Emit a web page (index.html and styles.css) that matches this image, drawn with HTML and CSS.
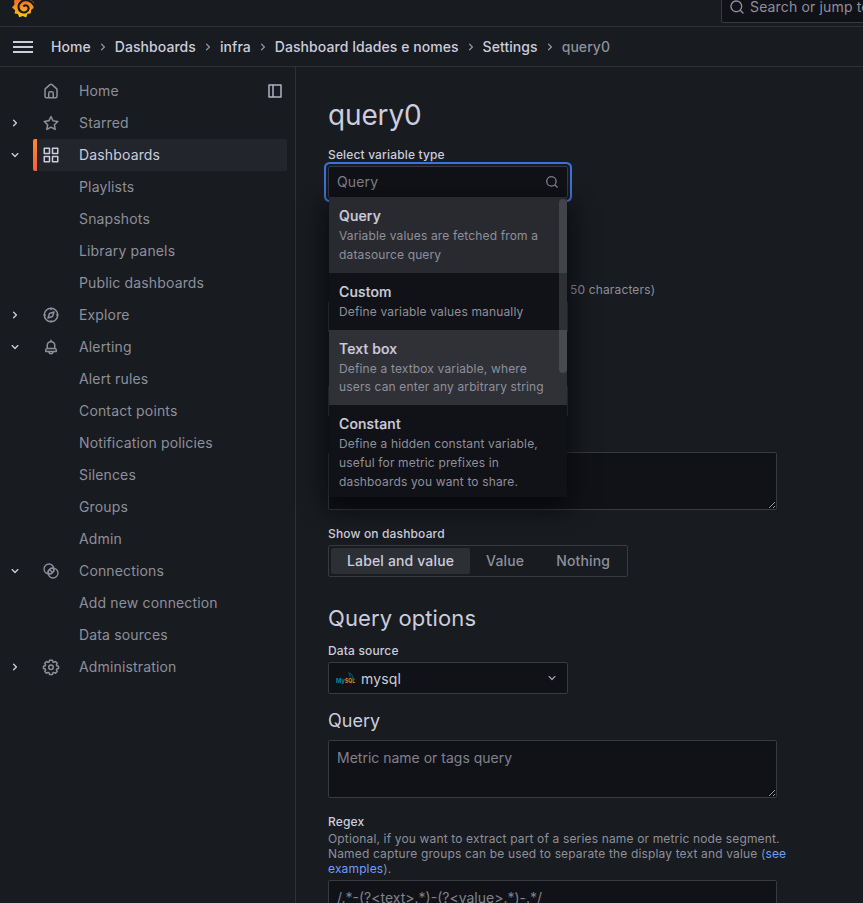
FILE: index.html
```html
<!DOCTYPE html>
<html lang="en">
<head>
<meta charset="utf-8">
<title>query0 - Settings - Grafana</title>
<link rel="stylesheet" href="styles.css">
</head>
<body>
<svg class="defs" width="0" height="0" aria-hidden="true">
  <symbol id="down" viewBox="0 0 24 24"><path d="M17,9.17a1,1,0,0,0-1.41,0L12,12.71,8.46,9.17a1,1,0,0,0-1.41,0,1,1,0,0,0,0,1.42l4.24,4.24a1,1,0,0,0,1.42,0L17,10.59A1,1,0,0,0,17,9.17Z"/></symbol>
  <symbol id="right" viewBox="0 0 24 24"><path d="M14.83,11.29,10.59,7.05a1,1,0,0,0-1.42,0,1,1,0,0,0,0,1.41L12.71,12,9.17,15.54a1,1,0,0,0,0,1.41,1,1,0,0,0,.71.29,1,1,0,0,0,.71-.29l4.24-4.24A1,1,0,0,0,14.83,11.29Z"/></symbol>
  <symbol id="search" viewBox="0 0 24 24"><path d="M21.71,20.29,18,16.61A9,9,0,1,0,16.61,18l3.68,3.68a1,1,0,0,0,1.42,0A1,1,0,0,0,21.71,20.29ZM11,18a7,7,0,1,1,7-7A7,7,0,0,1,11,18Z"/></symbol>
  <symbol id="home" viewBox="0 0 24 24"><path d="M20,8h0L14,2.74a3,3,0,0,0-4,0L4,8a3,3,0,0,0-1,2.26V19a3,3,0,0,0,3,3H18a3,3,0,0,0,3-3V10.25A3,3,0,0,0,20,8ZM14,20H10V15a1,1,0,0,1,1-1h2a1,1,0,0,1,1,1Zm5-1a1,1,0,0,1-1,1H16V15a3,3,0,0,0-3-3H11a3,3,0,0,0-3,3v5H6a1,1,0,0,1-1-1V10.25a1,1,0,0,1,.34-.75l6-5.25a1,1,0,0,1,1.32,0l6,5.25a1,1,0,0,1,.34.75Z"/></symbol>
  <symbol id="star" viewBox="0 0 24 24"><path d="M22,9.67A1,1,0,0,0,21.14,9l-5.69-.83L12.9,3a1,1,0,0,0-1.8,0L8.55,8.16,2.86,9a1,1,0,0,0-.81.68,1,1,0,0,0,.25,1l4.13,4-1,5.68A1,1,0,0,0,6.9,21.44L12,18.77l5.1,2.67a.93.93,0,0,0,.46.12,1,1,0,0,0,.59-.19,1,1,0,0,0,.4-1l-1-5.68,4.13-4A1,1,0,0,0,22,9.67Zm-6.15,4a1,1,0,0,0-.29.88l.72,4.2-3.76-2a1.06,1.06,0,0,0-.94,0l-3.76,2,.72-4.2a1,1,0,0,0-.29-.88l-3-3,4.21-.61a1,1,0,0,0,.76-.55L12,5.7l1.88,3.82a1,1,0,0,0,.76.55l4.21.61Z"/></symbol>
  <symbol id="apps" viewBox="0 0 24 24"><path d="M10,13H3a1,1,0,0,0-1,1v7a1,1,0,0,0,1,1h7a1,1,0,0,0,1-1V14A1,1,0,0,0,10,13ZM9,20H4V15H9ZM21,2H14a1,1,0,0,0-1,1v7a1,1,0,0,0,1,1h7a1,1,0,0,0,1-1V3A1,1,0,0,0,21,2ZM20,9H15V4h5Zm1,4H14a1,1,0,0,0-1,1v7a1,1,0,0,0,1,1h7a1,1,0,0,0,1-1V14A1,1,0,0,0,21,13Zm-1,7H15V15h5ZM10,2H3A1,1,0,0,0,2,3v7a1,1,0,0,0,1,1h7a1,1,0,0,0,1-1V3A1,1,0,0,0,10,2ZM9,9H4V4H9Z"/></symbol>
  <symbol id="bell" viewBox="0 0 24 24"><path d="M18,13.18V10a6,6,0,0,0-5-5.91V3a1,1,0,0,0-2,0V4.09A6,6,0,0,0,6,10v3.18A3,3,0,0,0,4,16v2a1,1,0,0,0,1,1H8.14a4,4,0,0,0,7.72,0H19a1,1,0,0,0,1-1V16A3,3,0,0,0,18,13.18ZM8,10a4,4,0,0,1,8,0v3H8Zm4,10a2,2,0,0,1-1.72-1h3.44A2,2,0,0,1,12,20Zm6-3H6V16a1,1,0,0,1,1-1H17a1,1,0,0,1,1,1Z"/></symbol>
  <symbol id="compass" viewBox="0 0 24 24"><g fill="none" stroke="currentColor" stroke-width="2" stroke-linejoin="round" stroke-linecap="round"><circle cx="12" cy="12" r="9"/><path d="M16 8l-2 6-6 2 2-6zM12 3v1.500M12 19.500v1.500M3 12h1.500M19.500 12h1.500"/></g></symbol>
  <symbol id="links" viewBox="0 0 24 24"><g fill="none" stroke="currentColor" stroke-width="1.800"><circle cx="9.300" cy="9.300" r="6.600"/><circle cx="14.700" cy="14.700" r="6.600"/><rect x="7.700" y="9.200" width="8.600" height="5.600" rx="2.800" transform="rotate(-45 12 12)"/><path d="M10.800 10.800l2.400 2.400"/></g></symbol>
  <symbol id="cog" viewBox="0 0 24 24"><g fill="none" stroke="currentColor" stroke-width="2" stroke-linejoin="round"><path d="M10.100 3h3.800l.7 2.300 1.300.5 2.100-1.100 2.300 2.300-1.100 2.200.5 1.200 2.300.7v2.800l-2.300.8-.5 1.200 1.100 2.100-2.300 2.300-2.100-1.100-1.300.5-.7 2.300h-3.800l-.7-2.300-1.300-.5L6 20.300 3.700 18l1.100-2.100-.5-1.200L2 13.900v-2.800l2.300-.7.5-1.200L3.700 7 6 4.700l2.100 1.100 1.300-.5z"/><circle cx="12" cy="12.300" r="3"/></g></symbol>
</svg>

<header class="topbar">
  <svg class="logo" viewBox="0 0 24 24">
    <defs><linearGradient id="flame" x1="0" y1="1" x2="0" y2="0"><stop offset="0" stop-color="#fbca0a"/><stop offset=".5" stop-color="#f8901e"/><stop offset="1" stop-color="#f05a28"/></linearGradient></defs>
    <path fill="url(#flame)" d="M12.200 0l2.800 2 3.600-.2 1.300 3.100 2.900 2.200-.8 3 .6 3-2.500 1.700-.7 3.900-3.300.3-1.300 4-3.500-1.700-3.800 1.500-1.300-3.500-3.500-.6.6-3.400L0 12.600l2.600-3.200L2.200 5l3.900-.8L8.200.5l3 1.200z"/>
    <path fill="none" stroke="#181b1f" stroke-width="2.200" stroke-linecap="round" d="M22.500 9.800C20.500 5 14 3.300 9.800 6.300 5.700 9.300 6 15 9.700 17c3.200 1.700 7.400 0 7.600-3.500.1-2.700-2.900-4.300-4.800-2.700"/>
  </svg>
  <div class="global-search"><svg class="i16"><use href="#search"/></svg><span>Search or jump to...</span></div>
</header>

<nav class="crumbs">
  <svg class="burger" viewBox="0 0 20 12"><path d="M0 1h20M0 6h20M0 11h20" stroke="currentColor" stroke-width="2"/></svg>
  <a>Home</a><svg class="i16"><use href="#right"/></svg>
  <a>Dashboards</a><svg class="i16"><use href="#right"/></svg>
  <a>infra</a><svg class="i16"><use href="#right"/></svg>
  <a>Dashboard Idades e nomes</a><svg class="i16"><use href="#right"/></svg>
  <a>Settings</a><svg class="i16"><use href="#right"/></svg>
  <span class="here">query0</span>
</nav>

<div class="shell">
  <aside class="side">
    <div class="row"><span class="tog"></span><div class="item"><svg class="i18"><use href="#home"/></svg><span>Home</span></div>
      <svg class="dock" viewBox="0 0 14 14"><path d="M1 1h12v12H1zM5 1v12" fill="none" stroke="currentColor" stroke-width="1.500" stroke-linejoin="round"/></svg></div>
    <div class="row"><svg class="tog"><use href="#right"/></svg><div class="item"><svg class="i18"><use href="#star"/></svg><span>Starred</span></div></div>
    <div class="row"><svg class="tog"><use href="#down"/></svg><div class="item active"><svg class="i18"><use href="#apps"/></svg><span>Dashboards</span></div></div>
    <div class="row sub">Playlists</div>
    <div class="row sub">Snapshots</div>
    <div class="row sub">Library panels</div>
    <div class="row sub">Public dashboards</div>
    <div class="row"><svg class="tog"><use href="#right"/></svg><div class="item"><svg class="i18"><use href="#compass"/></svg><span>Explore</span></div></div>
    <div class="row"><svg class="tog"><use href="#down"/></svg><div class="item"><svg class="i18"><use href="#bell"/></svg><span>Alerting</span></div></div>
    <div class="row sub">Alert rules</div>
    <div class="row sub">Contact points</div>
    <div class="row sub">Notification policies</div>
    <div class="row sub">Silences</div>
    <div class="row sub">Groups</div>
    <div class="row sub">Admin</div>
    <div class="row"><svg class="tog"><use href="#down"/></svg><div class="item"><svg class="i18"><use href="#links"/></svg><span>Connections</span></div></div>
    <div class="row sub">Add new connection</div>
    <div class="row sub">Data sources</div>
    <div class="row"><svg class="tog"><use href="#right"/></svg><div class="item"><svg class="i18"><use href="#cog"/></svg><span>Administration</span></div></div>
  </aside>

  <main class="page">
    <h1>query0</h1>
    <div class="field first">
      <label>Select variable type</label>
      <div class="box select focused">
        <span class="placeholder">Query</span><svg class="i14"><use href="#search"/></svg>
        <div class="menu">
          <div class="option selected"><b>Query</b><p>Variable values are fetched from a datasource query</p></div>
          <div class="option"><b>Custom</b><p>Define variable values manually</p></div>
          <div class="option hover"><b>Text box</b><p>Define a textbox variable, where users can enter any arbitrary string</p></div>
          <div class="option"><b>Constant</b><p>Define a hidden constant variable, useful for metric prefixes in dashboards you want to share.</p></div>
          <div class="thumb"></div>
        </div>
      </div>
    </div>

    <div class="field name"><p class="hint limit">50 characters)</p><div class="box"></div></div>
    <div class="field label"><div class="box"></div></div>
    <div class="field description"><textarea></textarea></div>
    <div class="field">
      <label>Show on dashboard</label>
      <div class="radios"><span class="on">Label and value</span><span>Value</span><span>Nothing</span></div>
    </div>

    <h2>Query options</h2>
    <div class="field source">
      <label>Data source</label>
      <div class="box select">
        <svg class="mysql" viewBox="0 0 20 12"><text x="0" y="10.500" font-size="6" textLength="9" lengthAdjust="spacingAndGlyphs" fill="#0087a5">My</text><text x="9" y="10.500" font-size="6" textLength="10" lengthAdjust="spacingAndGlyphs" fill="#e08a00">SQL</text><path d="M12 .8c2.500.3 4.300 2 4.800 4.200.2 1 1.600 2 2.500 3M13.300 2c.2 1.200 1 2 1.200 3.500" fill="none" stroke="#00758f" stroke-width=".8"/></svg>
        <span class="value">mysql</span><svg class="i16"><use href="#down"/></svg>
      </div>
    </div>
    <h3>Query</h3>
    <textarea placeholder="Metric name or tags query"></textarea>
    <div class="field">
      <label>Regex</label>
      <p class="hint">Optional, if you want to extract part of a series name or metric node segment.<br>Named capture groups can be used to separate the display text and value (<a>see<br>examples</a>).</p>
      <textarea placeholder="/.*-(?&lt;text&gt;.*)-(?&lt;value&gt;.*)-.*/"></textarea>
    </div>
  </main>
</div>
</body>
</html>
```
FILE: styles.css
```css
* { box-sizing: border-box; }
html { color-scheme: dark; }
body {
  margin: 0;
  height: 903px;
  overflow: hidden;
  background: #181b1f;
  color: #ccccdc;
  font: 400 14px/22px Inter, "Liberation Sans", sans-serif;
  letter-spacing: 0.15px;
  display: flex;
  flex-direction: column;
}
h1, h2, h3, p { margin: 0; font-weight: 400; }
svg { flex: none; display: block; fill: currentColor; }
.defs { position: absolute; }
.i14 { width: 14px; height: 14px; }
.i16 { width: 16px; height: 16px; }
.i18 { width: 18px; height: 18px; }

.topbar {
  flex: none;
  height: 27px;
  border-bottom: 1px solid #2d3035;
  display: flex;
  justify-content: space-between;
  align-items: flex-end;
  padding-left: 12px;
}
.logo { width: 23px; height: 24px; margin-bottom: 7px; }
.global-search {
  width: 142px;
  height: 32px;
  margin-bottom: 3px;
  padding-left: 7px;
  display: flex;
  align-items: center;
  gap: 5px;
  white-space: nowrap;
  overflow: hidden;
  background: #111217;
  border: 1px solid #383a40;
  border-right: 0;
  border-radius: 2px 0 0 2px;
  color: #8e8f9b;
}

.crumbs {
  flex: none;
  height: 40px;
  border-bottom: 1px solid #2d3035;
  display: flex;
  align-items: center;
  padding-left: 13px;
  font-weight: 500;
  letter-spacing: 0.06px;
  white-space: nowrap;
}
.burger { width: 20px; height: 12px; margin-right: 18px; }
.crumbs .i16 { margin: 1px 4px 0; color: #8e8f9b; }
.here { color: #8e8f9b; }

.shell { flex: 1; min-height: 0; display: flex; }
.side {
  width: 296px;
  flex: none;
  border-right: 1px solid #2d3035;
  padding: 8px 8px 0 7px;
  color: #8e8f9b;
}
.row { height: 32px; display: flex; align-items: center; }
.tog { width: 16px; height: 16px; flex: none; margin-right: 10px; color: #ccccdc; }
.item {
  flex: 1;
  height: 32px;
  display: flex;
  align-items: center;
  gap: 19px;
  padding-left: 9px;
}
.item.active {
  color: #ccccdc;
  background: linear-gradient(#ff8833, #f55f3e) 0 0 / 4px 100% no-repeat #22252b;
  border-radius: 2px;
}
.sub { padding-left: 72px; }
.dock { width: 14px; height: 14px; margin-right: 5px; color: #b3b3c2; }

.page { flex: 1; min-width: 0; padding: 31px 0 0 32px; }
h1 { font-size: 28px; line-height: 34px; letter-spacing: -0.15px; }
h2 { font-size: 22px; line-height: 28px; margin: 27px 0 11px; letter-spacing: 0.1px; }
h3 { font-size: 18px; line-height: 22px; margin: 16px 0 8px; letter-spacing: 0; }
.field { margin-top: 16px; }
.field.first { margin-top: 15px; }
.field.name { margin-top: 86px; }
.field.label { margin-top: 52px; }
.field.description { margin-top: 35px; }
.field.source { margin-top: 0; }
label { display: block; font-size: 12px; line-height: 16px; font-weight: 500; margin-bottom: 3px; }
.hint { font-size: 12px; line-height: 15px; margin: -2px 0 4px; color: #8e8f9b; white-space: nowrap; }
.limit { padding-left: 242px; }
.hint a { color: #6e9fff; }
.box, textarea {
  background: #111217;
  border: 1px solid #383a40;
  border-radius: 2px;
}
.box { width: 240px; height: 32px; }
textarea {
  display: block;
  width: 449px;
  height: 58px;
  padding: 6px 8px;
  outline: 0;
  color: #ccccdc;
  font: inherit;
  letter-spacing: 0;
  overflow: hidden;
  resize: both;
}
textarea::placeholder { color: #80818c; opacity: 1; }
.select {
  display: flex;
  align-items: center;
  justify-content: space-between;
  padding: 0 8px;
  position: relative;
}
.focused { box-shadow: 0 0 0 2px #181b1f, 0 0 0 4px #3d71d9; color: #8e8f9b; }
.placeholder { color: #80818c; }
.value { flex: 1; margin: 2px 0 0 5px; }
.source .i16 { color: #9a9ba8; margin-right: -1px; }
.mysql { width: 20px; height: 12px; margin-left: -1px; font-weight: 700; letter-spacing: 0; }

.menu {
  position: absolute;
  z-index: 2;
  top: 30px;
  left: 0;
  width: 238px;
  height: 300px;
  overflow: hidden;
  background: #111217;
  color: #ccccdc;
  box-shadow: 0 8px 24px 2px rgba(1, 4, 9, 0.75);
}
.option { padding: 8px 10px; }
.option b { display: block; font-weight: 500; -webkit-text-stroke: 0.2px; }
.option p { font-size: 12px; line-height: 18.850px; color: #8e8f9b; }
.selected { background: #292a2f; }
.hover { background: #303136; }
.thumb {
  position: absolute;
  top: 2px;
  right: 0;
  width: 8px;
  height: 174px;
  border-radius: 4px;
  background: rgba(204, 204, 220, 0.16);
}

.radios {
  width: 300px;
  height: 32px;
  padding: 2px;
  border: 1px solid #383a40;
  border-radius: 2px;
  display: flex;
  font-weight: 500;
  color: #8e8f9b;
}
.radios span { padding: 0 16px; line-height: 26px; white-space: nowrap; }
.radios .on { background: #2c2f34; color: #ccccdc; border-radius: 2px; }
```
